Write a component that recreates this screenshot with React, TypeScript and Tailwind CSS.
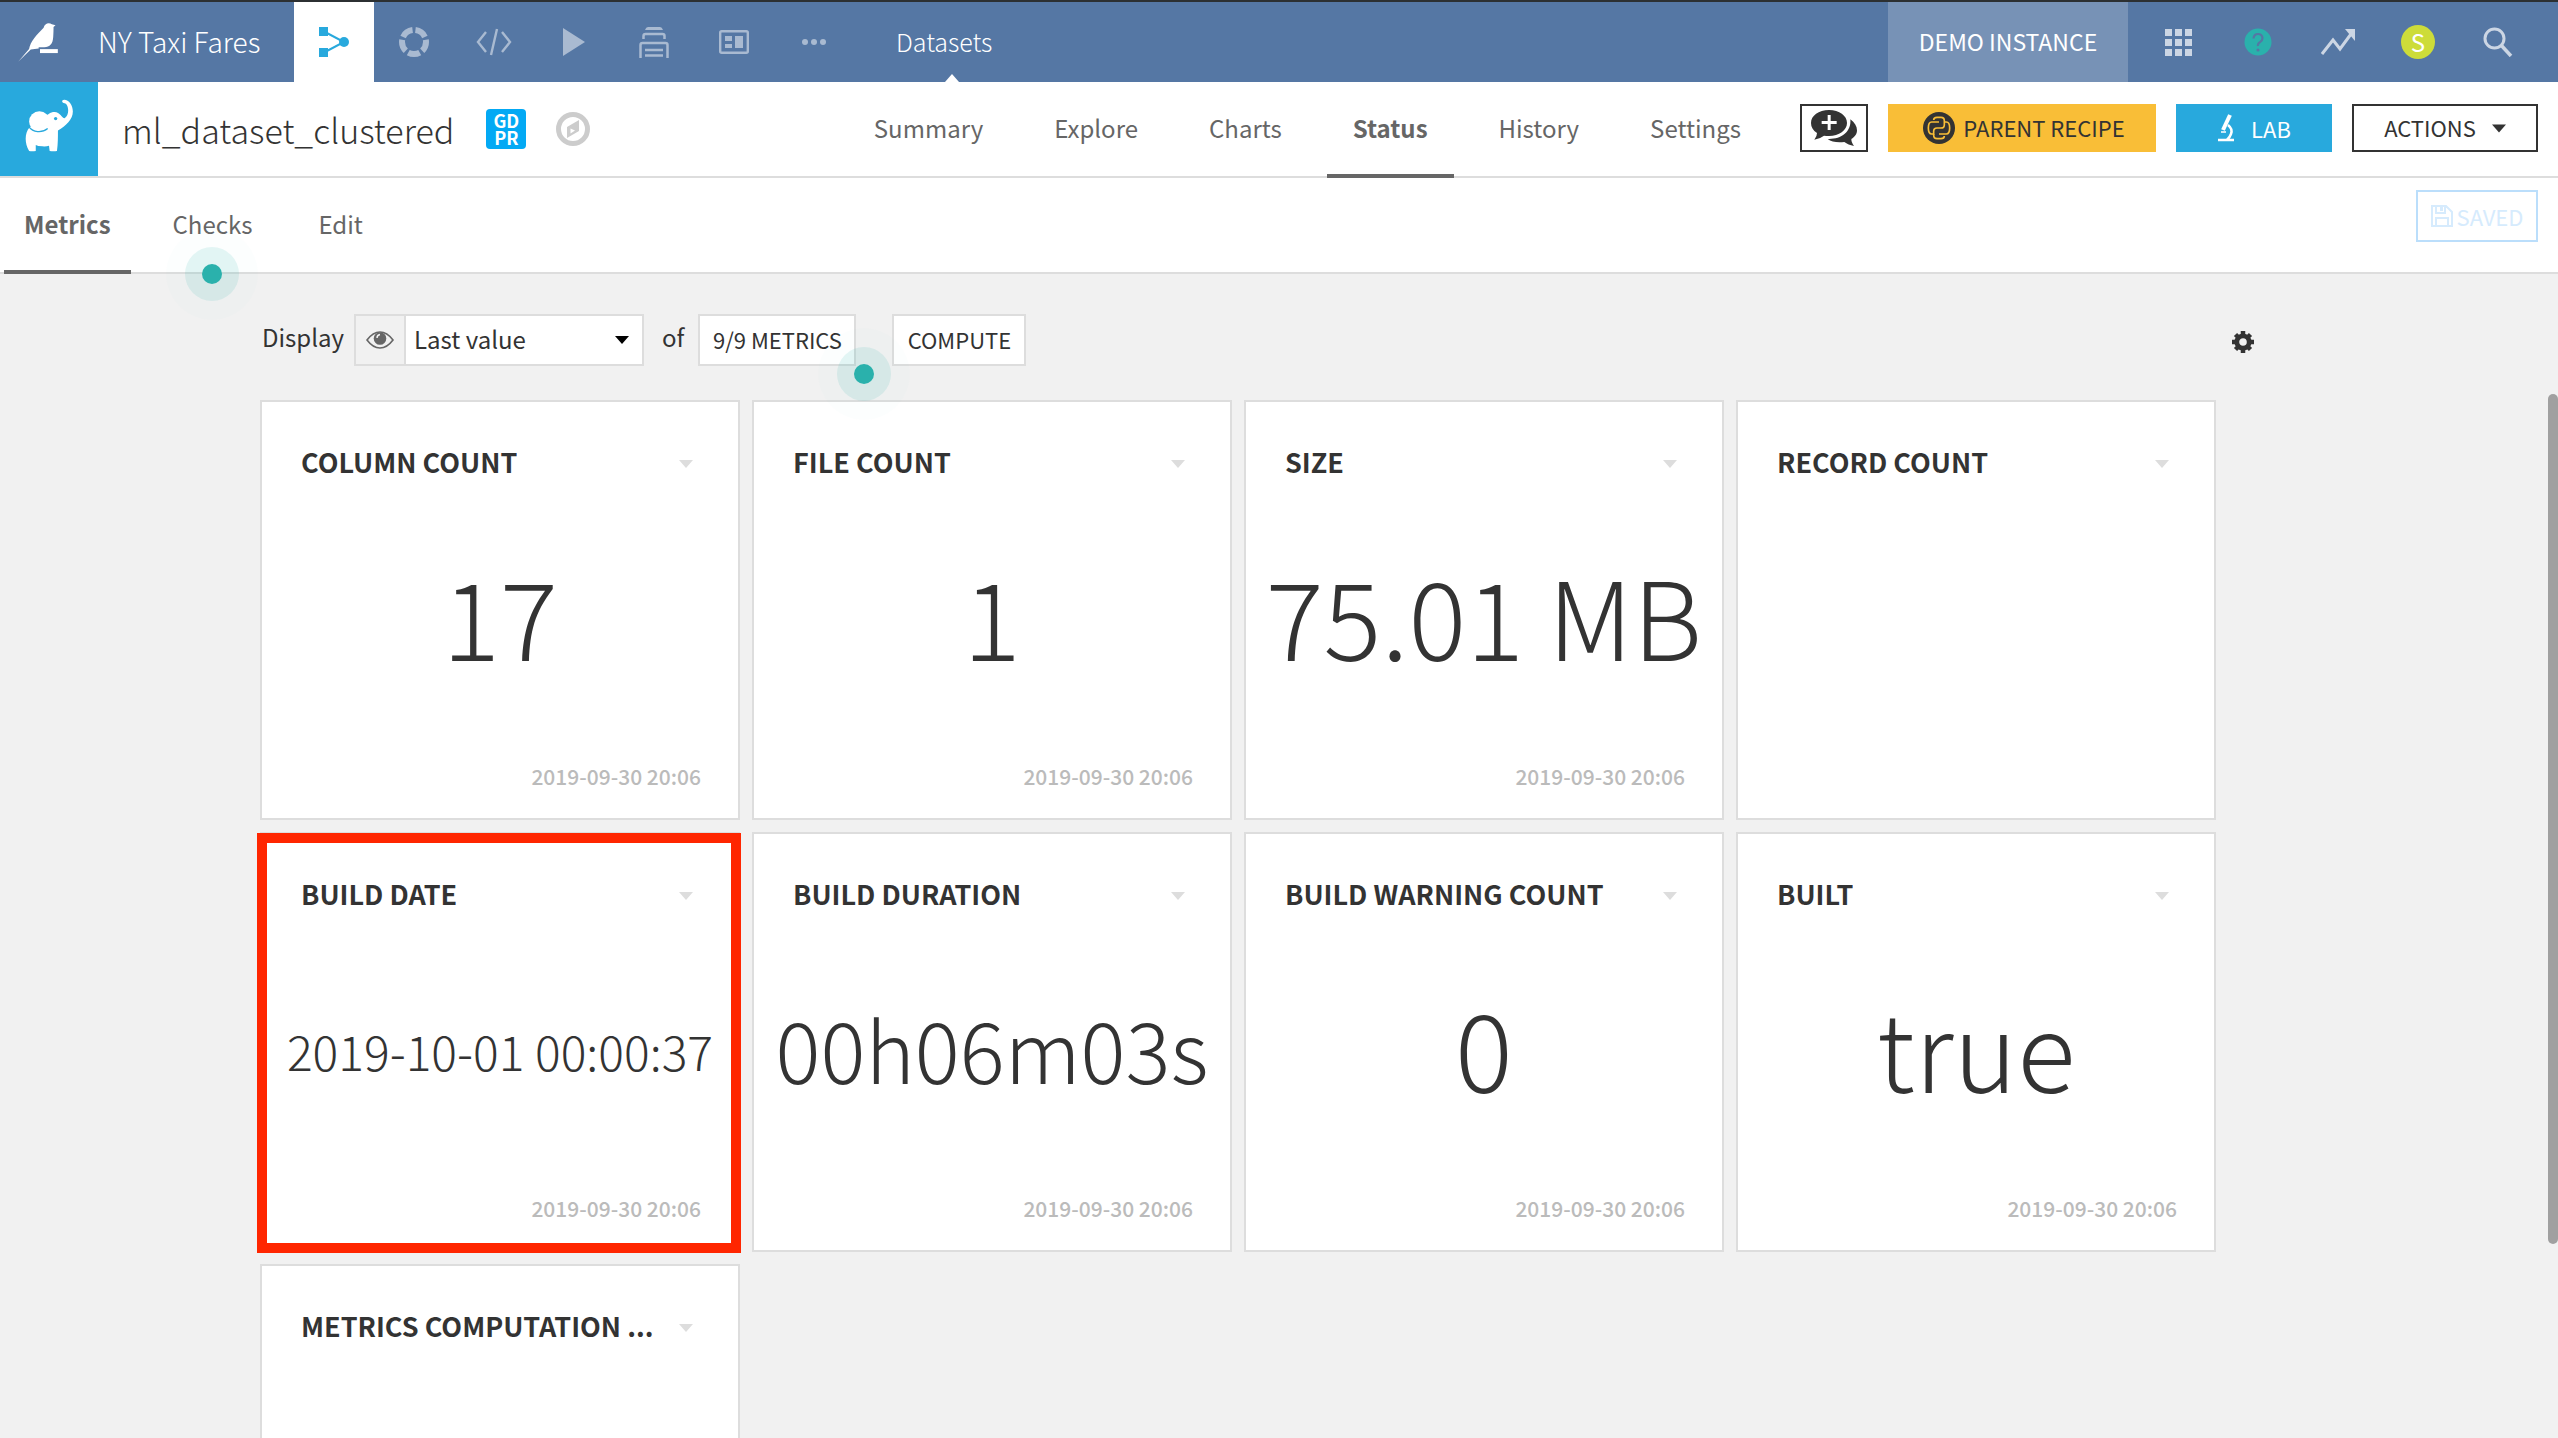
import { useState } from "react";
import type { ReactNode } from "react";
import clsx from "clsx";

type Metric = {
  title: string;
  value?: string;
  size?: string;
  date?: string;
  highlighted?: boolean;
};

const RUN_DATE = "2019-09-30 20:06";

const METRICS: Metric[] = [
  { title: "COLUMN COUNT", value: "17", date: RUN_DATE },
  { title: "FILE COUNT", value: "1", date: RUN_DATE },
  { title: "SIZE", value: "75.01 MB", date: RUN_DATE },
  { title: "RECORD COUNT" },
  {
    title: "BUILD DATE",
    value: "2019-10-01 00:00:37",
    size: "text-[48px] pb-5",
    date: RUN_DATE,
    highlighted: true,
  },
  { title: "BUILD DURATION", value: "00h06m03s", size: "text-[84px] pb-6", date: RUN_DATE },
  { title: "BUILD WARNING COUNT", value: "0", date: RUN_DATE },
  { title: "BUILT", value: "true", date: RUN_DATE },
  { title: "METRICS COMPUTATION ..." },
];

const DATASET_TABS = ["Summary", "Explore", "Charts", "Status", "History", "Settings"];
const STATUS_TABS = ["Metrics", "Checks", "Edit"];

function BirdLogo() {
  return (
    <svg viewBox="0 0 120 118" className="h-[39px] w-10" fill="currentColor">
      <path d="M0 117 33 79C36 56 58 33 77 14 80 1 93-3 102 4l11 3-6 5c0 9 0 18-1 30-1 20-10 31-27 31H62v4L38 80Z" />
      <path d="M66 79h54v12H66z" />
    </svg>
  );
}

function ElephantIcon() {
  return (
    <svg viewBox="0 0 144 160" className="h-[53px] w-12" fill="#fff">
      <path d="M13 86C-1 101-3 132 12 157q9 2 20 0v-18q6 4 20 4 12 1 20-2l2 16q12 2 22 0c3-22 3-42 3-62 24-13 45-33 45-57 0-20-12-36-26-36-9 0-8 11 1 11 13 3 16 36 0 45-8-1-14-19-30-19-7 0-12 2-18 6Z" />
      <ellipse cx="43" cy="68" rx="31" ry="31" />
      <path d="M12 85c11 15 38 19 56 4" fill="none" stroke="#28a9dd" strokeWidth="4" />
      <circle cx="92" cy="59" r="5" fill="#28a9dd" />
    </svg>
  );
}

function FlowIcon() {
  return (
    <svg viewBox="0 0 30 30" className="h-[30px] w-[30px]" fill="#28a9dd">
      <path d="M0 0h9v9H0zM0 21h9v9H0z" />
      <path d="M6 5l19 10L6 25" fill="none" stroke="#28a9dd" strokeWidth="2" />
      <circle cx="25" cy="15" r="5" />
    </svg>
  );
}

function RecipeRingIcon() {
  return (
    <svg viewBox="0 0 30 30" className="h-[30px] w-[30px]" fill="none" stroke="currentColor" strokeWidth="6">
      <circle cx="15" cy="15" r="12" pathLength="50" strokeDasharray="8 2" strokeDashoffset="-1" transform="rotate(-90 15 15)" />
    </svg>
  );
}

function CodeIcon() {
  return (
    <svg viewBox="0 0 36 28" className="h-7 w-9" fill="none" stroke="currentColor" strokeWidth="2.4">
      <path d="M10 4 2 14l8 10M26 4l8 10-8 10M21 1l-6 26" />
    </svg>
  );
}

function PlayIcon() {
  return (
    <svg viewBox="0 0 22 28" className="h-7 w-[22px]" fill="currentColor">
      <path d="M0 0l22 14L0 28z" />
    </svg>
  );
}

function StackIcon() {
  return (
    <svg viewBox="0 0 30 31" className="h-[31px] w-[30px]" fill="none" stroke="currentColor" strokeWidth="2.5">
      <path d="M1.5 31V18q0-2 2-2h23q2 0 2 2v13M4.500 12V9q0-2 2-2h17q2 0 2 2v3M6 23h18M6 28.500h18" />
      <path d="M6 3Q7 0 9 0h12q2 0 3 3z" fill="currentColor" stroke="none" />
    </svg>
  );
}

function DashboardIcon() {
  return (
    <svg viewBox="0 0 30 24" className="h-6 w-[30px]" fill="currentColor">
      <rect x="1.200" y="1.200" width="27.600" height="21.600" rx="1.500" fill="none" stroke="currentColor" strokeWidth="2.400" />
      <path d="M6 6h7v5H6zM6 14h7v4H6zM16 6h8v12h-8z" />
    </svg>
  );
}

function DotsIcon() {
  return (
    <svg viewBox="0 0 24 6" className="h-1.5 w-6" fill="currentColor">
      <circle cx="3" cy="3" r="3" />
      <circle cx="12" cy="3" r="3" />
      <circle cx="21" cy="3" r="3" />
    </svg>
  );
}

function GridIcon() {
  return (
    <svg viewBox="0 0 27 27" className="h-[27px] w-[27px]" fill="currentColor">
      <path d="M0 0h7v7H0zM10 0h7v7h-7zM20 0h7v7h-7zM0 10h7v7H0zM10 10h7v7h-7zM20 10h7v7h-7zM0 20h7v7H0zM10 20h7v7h-7zM20 20h7v7h-7z" />
    </svg>
  );
}

function HelpIcon() {
  return (
    <svg viewBox="0 0 28 28" className="h-7 w-7">
      <circle cx="14" cy="14" r="13.500" fill="#2ab1ac" />
      <path d="M9.500 10.500q.5-4.500 4.500-4.500t4.500 4q0 2.500-2.500 4.200T14 18" fill="none" stroke="#5577a4" strokeWidth="2.200" />
      <circle cx="14" cy="22" r="1.600" fill="#5577a4" />
    </svg>
  );
}

function TrendIcon() {
  return (
    <svg viewBox="0 0 34 27" className="h-[27px] w-[34px]" fill="none" stroke="currentColor" strokeWidth="3">
      <path d="M1 25 12 11l7 9L30 5" />
      <path d="M24 0h10v12z" fill="currentColor" stroke="none" />
    </svg>
  );
}

function SearchIcon() {
  return (
    <svg viewBox="0 0 30 30" className="h-[30px] w-[30px]" fill="none" stroke="currentColor" strokeWidth="3">
      <circle cx="11.500" cy="11.500" r="9.500" />
      <path d="M18 18l10 11" strokeWidth="3.500" />
    </svg>
  );
}

function CompassIcon() {
  return (
    <svg viewBox="0 0 34 34" className="h-[34px] w-[34px]">
      <circle cx="17" cy="17" r="14.500" fill="none" stroke="#ccc" strokeWidth="5" />
      <path d="M23 8v11L11 26V15z" fill="#ccc" />
      <path d="M14.500 16.500 19 18.500 14.500 21.500z" fill="#fff" />
    </svg>
  );
}

function DiscussionIcon() {
  return (
    <svg viewBox="0 0 138 108" className="h-9 w-[46px]" fill="#333">
      <path d="M54 0c31 0 54 17 54 39S84 78 54 78q-8 0-15-1-13 10-29 12 8-9 8-20C6 62 0 51 0 39 0 17 23 0 54 0Z" />
      <path d="M50 15h9v18h18v9H59v18h-9V42H32v-9h18z" fill="#fff" />
      <path d="M118 28c13 10 20 20 20 33 0 12-7 20-17 26 0 8 3 14 8 21-12-2-21-6-29-12-22 3-39-1-50-9 38 2 72-20 68-59Z" />
    </svg>
  );
}

function PythonIcon() {
  return (
    <svg viewBox="0 0 96 96" className="h-8 w-8" fill="none" stroke="#f9be37" strokeWidth="5">
      <circle cx="48" cy="48" r="48" fill="#333" stroke="none" />
      <path d="M48 30H26q-10 0-10 18t10 18h6v-8q0-10 10-10h12q10 0 10-10V26q0-10-10-10H42q-10 0-10 8" />
      <path d="M48 66h22q10 0 10-18T70 30h-6M32 66v4q0 10 10 10h12q10 0 10-8" />
    </svg>
  );
}

function MicroscopeIcon() {
  return (
    <svg viewBox="0 0 18 28" className="h-7 w-[18px]" fill="none" stroke="#fff">
      <path d="M13 1 6 16" strokeWidth="4" />
      <path d="M11 11q5 4 3 9-1 3-4 6" strokeWidth="2.500" />
      <path d="M4 18h5" strokeWidth="1.500" />
      <path d="M1 26h16" strokeWidth="2.500" />
    </svg>
  );
}

function FloppyIcon() {
  return (
    <svg viewBox="0 0 22 22" className="h-[22px] w-[22px]" fill="none" stroke="currentColor" strokeWidth="2">
      <path d="M1 1h14l6 6v14H1zM5 21v-8h12v8M5 1v7h9V1" />
      <path d="M9 2h3v4H9z" fill="currentColor" stroke="none" />
    </svg>
  );
}

function EyeIcon() {
  return (
    <svg viewBox="0 0 28 18" className="h-[18px] w-7">
      <path d="M1 9Q7 1 14 1t13 8q-6 8-13 8T1 9Z" fill="none" stroke="#666" strokeWidth="1.600" />
      <circle cx="14" cy="7.500" r="6.300" fill="#666" />
      <path d="M11 7q0-3 3-3.500" fill="none" stroke="#f1f1f1" strokeWidth="1.400" />
    </svg>
  );
}

function GearIcon() {
  return (
    <svg viewBox="0 0 22 22" className="h-[22px] w-[22px]" fill="none" stroke="#333">
      <circle cx="11" cy="11" r="6.200" strokeWidth="4.800" />
      <path d="M11 0v4M11 18v4M0 11h4M18 11h4M3.500 3.500l3 3M15.500 15.500l3 3M3.500 18.500l3-3M15.500 6.500l3-3" strokeWidth="4.500" />
    </svg>
  );
}

function Caret({ className }: { className: string }) {
  return (
    <svg viewBox="0 0 14 8" className={className} fill="currentColor">
      <path d="M0 0h14L7 8z" />
    </svg>
  );
}

function NavButton({ label, active, children }: { label: string; active?: boolean; children: ReactNode }) {
  return (
    <button
      type="button"
      aria-label={label}
      className={clsx("flex w-20 shrink-0 items-center justify-center", active && "bg-white")}
    >
      {children}
    </button>
  );
}

function TopBar() {
  return (
    <header className="flex h-[82px] shrink-0 border-t-2 border-[#2c3032] bg-[#5577a4] text-white">
      <a href="#home" aria-label="Home" className="flex w-[98px] shrink-0 items-center pl-[18px]">
        <BirdLogo />
      </a>
      <a href="#project" className="flex w-[196px] shrink-0 items-center pb-0.5 text-[28px] font-light">
        NY Taxi Fares
      </a>
      <div className="flex text-[#a9bad1]">
        <NavButton label="Flow" active>
          <FlowIcon />
        </NavButton>
        <NavButton label="Recipes">
          <RecipeRingIcon />
        </NavButton>
        <NavButton label="Code">
          <CodeIcon />
        </NavButton>
        <NavButton label="Jobs">
          <PlayIcon />
        </NavButton>
        <NavButton label="Wiki">
          <StackIcon />
        </NavButton>
        <NavButton label="Dashboards">
          <DashboardIcon />
        </NavButton>
        <NavButton label="More">
          <DotsIcon />
        </NavButton>
      </div>
      <a href="#datasets" className="relative ml-[42px] flex items-center text-[25px] font-light">
        Datasets
        <Caret className="absolute bottom-0 left-1/2 h-2 w-4 rotate-180" />
      </a>
      <div className="ml-auto flex w-60 items-center justify-center bg-[#7792b6] pb-0.5 text-[23px]">DEMO INSTANCE</div>
      <div className="flex pr-5 pl-2.5 text-[#ccd6e4]">
        <NavButton label="Applications">
          <GridIcon />
        </NavButton>
        <NavButton label="Help">
          <HelpIcon />
        </NavButton>
        <NavButton label="Activity">
          <TrendIcon />
        </NavButton>
        <NavButton label="Profile">
          <span className="flex h-[34px] w-[34px] items-center justify-center rounded-full bg-[#cddc39] text-[24px] text-white">
            S
          </span>
        </NavButton>
        <NavButton label="Search">
          <SearchIcon />
        </NavButton>
      </div>
    </header>
  );
}

function DatasetBar() {
  return (
    <div className="flex h-24 shrink-0 border-b-2 border-[#ddd] bg-white">
      <div className="flex w-[98px] shrink-0 items-center justify-center bg-[#28a9dd] pb-2">
        <ElephantIcon />
      </div>
      <h1 className="ml-6 flex items-center text-[34px] font-light">ml_dataset_clustered</h1>
      <span className="ml-8 flex h-10 w-10 items-center justify-center self-center rounded-sm bg-[#03a9f4] text-center text-[18px] leading-[17px] font-bold text-white">
        GD
        <br />
        PR
      </span>
      <button type="button" aria-label="Navigate around" className="ml-[30px]">
        <CompassIcon />
      </button>

      <nav className="mr-[33px] ml-auto flex gap-[19px] text-[24px] text-[#666]">
        {DATASET_TABS.map((tab) => (
          <a
            key={tab}
            href={`#${tab.toLowerCase()}`}
            className={clsx(
              "-mb-0.5 flex items-center border-b-4 px-[26px]",
              tab === "Status" ? "border-[#666] font-bold" : "border-transparent",
            )}
          >
            {tab}
          </a>
        ))}
      </nav>

      <div className="mr-5 mb-0.5 flex h-12 gap-5 self-center text-[22px] text-[#333]">
        <button type="button" aria-label="Discussions" className="flex w-[68px] items-center justify-center border-2 border-[#333]">
          <DiscussionIcon />
        </button>
        <button type="button" className="flex w-[268px] items-center justify-center gap-2 bg-[#f9be37] pl-1">
          <PythonIcon />
          <span className="pb-0.5">PARENT RECIPE</span>
        </button>
        <button type="button" className="flex w-[156px] items-center justify-center gap-4 bg-[#28a9dd] text-white">
          <MicroscopeIcon />
          LAB
        </button>
        <button type="button" className="flex w-[186px] items-center justify-center gap-4 border-2 border-[#333]">
          <span className="pb-0.5">ACTIONS</span>
          <Caret className="h-[9px] w-3.5" />
        </button>
      </div>
    </div>
  );
}

function Beacon({ className }: { className: string }) {
  return (
    <span
      className={clsx(
        "pointer-events-none absolute z-10 flex h-[92px] w-[92px] items-center justify-center rounded-full bg-[#2ab1ac]/1",
        className,
      )}
    >
      <span className="flex h-[54px] w-[54px] items-center justify-center rounded-full bg-[#2ab1ac]/12">
        <span className="h-5 w-5 rounded-full bg-[#2ab1ac]" />
      </span>
    </span>
  );
}

function StatusBar() {
  return (
    <div className="flex h-24 shrink-0 border-b-2 border-[#ddd] bg-white pr-5">
      <nav className="flex gap-[18px] pl-1 text-[24px] text-[#666]">
        {STATUS_TABS.map((tab) => (
          <a
            key={tab}
            href={`#${tab.toLowerCase()}`}
            className={clsx(
              "relative -mb-0.5 flex items-center border-b-4",
              tab === "Metrics" ? "border-[#666] px-5 font-bold" : "border-transparent px-6",
            )}
          >
            {tab}
            {tab === "Checks" ? <Beacon className="-bottom-[50px] left-1/2 -translate-x-1/2" /> : null}
          </a>
        ))}
      </nav>
      <button
        type="button"
        disabled
        className="mt-3 ml-auto flex h-[52px] w-[122px] items-center justify-center gap-1 border-2 border-[#bbdefb] text-[22px] text-[#d6ebfd]"
      >
        <FloppyIcon />
        SAVED
      </button>
    </div>
  );
}

function Toolbar() {
  const [display, setDisplay] = useState("last");

  return (
    <div className="flex h-[52px] items-center text-[24px]">
      <label htmlFor="display-mode" className="pb-1.5 pl-0.5">
        Display
      </label>
      <div className="relative ml-2.5 flex h-full border-2 border-[#ddd]">
        <span className="flex w-[50px] items-center justify-center border-r-2 border-[#ddd]">
          <EyeIcon />
        </span>
        <select
          id="display-mode"
          value={display}
          onChange={(event) => setDisplay(event.target.value)}
          className="w-[236px] appearance-none bg-white pb-0.5 pl-2"
        >
          <option value="last">Last value</option>
          <option value="history">History</option>
        </select>
        <Caret className="pointer-events-none absolute top-5 right-3 h-2 w-4 text-black" />
      </div>
      <span className="ml-[18px] pb-1.5">of</span>
      <button type="button" className="relative ml-3.5 h-full w-[158px] border-2 border-[#ddd] bg-white pb-0.5 text-[22px]">
        9/9 METRICS
        <Beacon className="-right-14 -bottom-14" />
      </button>
      <button type="button" className="ml-9 h-full w-[134px] border-2 border-[#ddd] bg-white pb-0.5 text-[22px]">
        COMPUTE
      </button>
      <button type="button" aria-label="Settings" className="mt-1 mr-11 ml-auto">
        <GearIcon />
      </button>
    </div>
  );
}

function MetricCard({ metric }: { metric: Metric }) {
  return (
    <article className="relative flex h-[420px] w-[480px] flex-col border-2 border-[#ddd] bg-white">
      <div className="flex h-[120px] items-center justify-between pr-[45px] pl-[39px]">
        <h2 className="truncate text-[27px] font-bold">{metric.title}</h2>
        <button type="button" aria-label={`${metric.title} options`} className="mt-1 text-[#ddd]">
          <Caret className="h-2 w-3.5" />
        </button>
      </div>
      <p
        className={clsx(
          "flex flex-1 items-center justify-center leading-none font-light whitespace-nowrap",
          metric.size ?? "pb-7 text-[108px]",
        )}
      >
        {metric.value}
      </p>
      <time className="flex h-[84px] items-center justify-end pt-0.5 pr-[37px] text-[21px] font-medium text-[#bbb]">
        {metric.date}
      </time>
      {metric.highlighted ? (
        <span className="absolute -top-px -right-[3px] -bottom-[3px] -left-[5px] border-10 border-[#ff2600]" />
      ) : null}
    </article>
  );
}

export default function App() {
  return (
    <div className="flex h-screen flex-col overflow-hidden bg-[#f1f1f1] font-['Noto_Sans_CJK_SC','Noto_Sans',sans-serif] text-[#333]">
      <TopBar />
      <DatasetBar />
      <StatusBar />
      <main className="relative flex-1 overflow-hidden">
        <div className="mx-auto w-full max-w-[2038px] pt-10">
          <Toolbar />
          <div className="mt-[34px] flex flex-wrap gap-3">
            {METRICS.map((metric) => (
              <MetricCard key={metric.title} metric={metric} />
            ))}
          </div>
        </div>
        <span className="absolute top-[120px] right-0 h-[850px] w-2.5 rounded-full bg-[#a0a0a0]" />
      </main>
    </div>
  );
}
